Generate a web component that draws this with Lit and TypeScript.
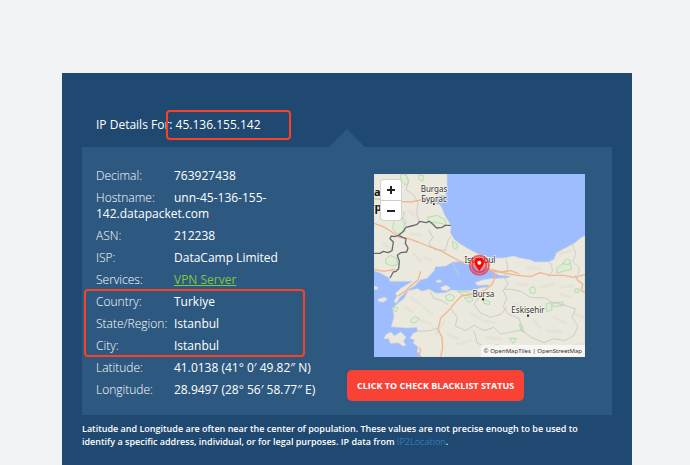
import { LitElement, html, css, svg } from "lit";
import { customElement } from "lit/decorators.js";

const LAND: string[] = [
  // Thrace and the Bulgarian coast
  "M0 0H219V45L214 58L219 66L204 64L190 66L183 76L177 84L188 90L198 92L205 106L212 124L231 154L229 176L240 196L258 210L282 224L318 243L352 252L356 268L345 286L322 274L290 274L262 262L236 264L215 276L184 278L180 290L160 312L138 318L124 334L104 346L92 358L78 370L66 388L60 382L70 366L64 358L82 342L96 334L116 322L48 322L46 312L18 296L0 290Z",
  // Anatolia
  "M356 252L390 252L420 246L436 252L470 258L482 264L524 264L540 256L548 236L586 216L604 206L620 192L633 186V549H144L130 532L132 518L118 508L122 498L108 492L118 478L132 472L128 460L100 462L52 458L60 428L56 402L74 386L92 372L102 350L130 344L144 352L166 346L186 358L214 356L232 348L262 350L300 350L318 342L340 340L346 332L310 334L304 326L326 318L352 314L400 312L410 306L376 304L354 292L344 276Z",
  "M36 482L50 474L62 486L80 474L96 490L88 502L96 514L86 516L74 506L50 508L44 494L30 494Z",
  "M12 376L32 370L40 376L28 384L14 382Z",
  "M0 336L12 340L10 346L0 346Z",
  "M186 320L200 318L202 324L190 326Z",
  "M200 340L216 334L230 342L218 350L204 348Z",
];

const ROADS: string[] = [
  "M0 148L28 158L54 174L76 190L104 194L132 204L162 216L200 230L232 248L262 264L300 272L332 282L360 292L398 298L430 304L470 308L498 296L530 304L568 304L600 310L633 302",
  "M0 286L30 292L64 286",
  "M140 292L132 318L112 334L96 350L72 366",
  "M360 290L364 310L352 334L330 350L300 360L262 366L238 392L222 412L200 432L192 466L204 490L206 520L200 549",
  "M76 82L110 84L150 76L184 76L214 70",
  "M0 74L20 76",
  "M130 549L140 532L136 520",
  "M352 286L380 294L410 290L436 300",
  "M604 304L612 320L626 330L622 350L633 356",
];

const REGIONS: string[] = [
  "M96 0L104 20L96 48L118 62L132 86L128 112L134 144",
  "M164 166L176 190L164 208L182 226L214 230L222 200L232 186",
  "M98 160L84 136L92 116L70 108",
  "M236 264L244 286L256 302",
  "M396 256L402 282L390 310L402 328L388 350L398 372L388 398L402 420L436 434L444 468L470 490L510 506L540 494L572 500L600 484L612 456L594 430L604 404L566 392L536 386L514 372L470 370L440 352L410 346L390 346",
  "M528 264L536 290L522 310",
  "M316 370L300 390L318 416L350 430L382 420L398 398",
  "M230 404L250 430L244 456L274 470L300 454L330 470L360 460L380 480L420 472L444 468",
  "M168 350L178 372L204 380L222 392",
  "M594 210L606 240L596 262L616 282L612 302",
  "M132 472L168 470L190 462",
  "M300 470L310 508L340 520L372 512L396 530L430 520",
];

const PARKS: string[] = [
  "M60 136L88 132L98 144L88 158L94 172L70 180L56 164Z",
  "M160 130L190 124L214 138L216 152L190 146L164 144Z",
  "M78 4L90 0L100 10L104 28L92 32L82 20Z",
  "M134 2L150 6L146 22L134 16Z",
  "M236 202L248 208L252 220L242 226L236 216Z",
  "M34 256L48 244L68 252L70 272L52 276L36 268Z",
  "M214 366L228 360L242 368L236 380L220 380Z",
  "M272 372L290 368L298 378L286 386Z",
  "M250 352L280 354L296 360L270 364Z",
  "M110 436L124 428L136 434L126 446L112 446Z",
  "M468 342L480 338L486 350L480 360L468 356Z",
  "M516 390L532 386L534 408L518 412Z",
  "M534 386L566 384L568 394L538 398Z",
  "M548 282L566 270L590 268L592 286L566 292L550 298Z",
  "M436 450L444 454L450 476L440 468Z",
  "M406 492L428 494L418 508Z",
  "M60 398L72 402L66 414L58 408Z",
  "M328 376L348 384L346 392L330 388Z",
  "M602 346L614 344L616 354L604 356Z",
  "M564 268L580 254L590 260L584 272Z",
];

const BORDERS: string[] = [
  "M231 154L214 154L204 160L188 162L176 150L166 142L156 146L138 142L128 152L112 156L96 160L86 174L74 184L62 188L52 186L48 194L58 204L54 230L42 236L28 232L18 238L0 238",
  "M74 184L86 190L96 194L94 208L102 222L98 234L80 236L70 244L76 262L74 284L66 292L58 294L48 312",
];

const HILLS: string[] = [
  "M20 120L50 110M104 110L126 128M30 210L46 222M110 180L140 184M150 250L172 258M120 240L140 262",
  "M110 372L140 390M150 400L174 420M90 400L116 412M140 440L170 448M210 440L186 480M220 480L250 494M250 510L290 500",
  "M330 440L360 446M290 420L320 432M420 390L450 400M480 440L500 462M540 430L574 446M340 490L380 496M520 470L560 474",
  "M430 330L460 334M500 340L540 330M560 340L596 336M560 360L590 370M460 280L500 284M556 240L590 230M600 420L630 430M580 520L630 510",
];

@customElement("region-map")
export class RegionMap extends LitElement {
  static styles = css`
    :host {
      display: block;
      position: relative;
      font-family: "Noto Sans", "Open Sans", sans-serif;
    }
    .canvas {
      display: block;
      width: 100%;
      height: auto;
      background: #9ebdff;
    }
    .land { fill: #ebe9de; stroke: #d9dad0; stroke-width: 2; }
    .hill { fill: none; stroke: #e5e3d8; stroke-width: 9; stroke-linecap: round; }
    .park { fill: #e2ebd5; stroke: #b4deae; stroke-width: 3; }
    .region { fill: none; stroke: #cdcdc9; stroke-width: 3; }
    .road { fill: none; stroke: #f0b592; stroke-width: 4; stroke-linejoin: round; }
    .border { fill: none; stroke: #6b6a6e; stroke-width: 4; stroke-linejoin: round; }
    .label {
      font-size: 24px;
      fill: #333;
      stroke: #f4f3ea;
      stroke-width: 4;
      paint-order: stroke;
      text-anchor: middle;
    }
    .major { font-size: 33px; font-weight: 700; fill: #111; text-anchor: start; }
    .zoom {
      position: absolute;
      top: 6px;
      left: 7px;
      width: 20px;
      display: grid;
      border-radius: 3px;
      background: #fff;
      box-shadow: 0 0 0 1px #d4d3ca;
    }
    .zoom button {
      display: grid;
      place-items: center;
      height: 20px;
      padding: 0;
      border: 0;
      background: none;
    }
    .zoom button + button { border-top: 1px solid #ccc; }
    .sign { width: 8px; height: 8px; display: block; }
    .credit {
      position: absolute;
      right: 0;
      bottom: 0;
      padding: 0 3px;
      background: rgba(255, 255, 255, 0.6);
      color: #333;
      font-size: 6px;
      line-height: 12px;
      white-space: nowrap;
    }
    .credit a { color: inherit; text-decoration: none; }
  `;

  render() {
    const draw = (name: string, paths: string[]) =>
      paths.map((d) => svg`<path class=${name} d=${d}></path>`);
    return html`
      <svg class="canvas" viewBox="0 0 633 549" role="img" aria-label="Map of Istanbul">
        ${draw("land", LAND)} ${draw("hill", HILLS)} ${draw("park", PARKS)}
        ${draw("region", REGIONS)} ${draw("road", ROADS)} ${draw("border", BORDERS)}
        <text class="label major" x="0" y="67">a</text>
        <text class="label major" x="-14" y="110">гр</text>
        <text class="label" x="180" y="54">Burgas</text>
        <text class="label" x="180" y="83">Бургас</text>
        <text class="label" x="318" y="267">Istanbul</text>
        <text class="label" x="328" y="368">Bursa</text>
        <text class="label" x="462" y="418">Eskisehir</text>
        <rect x="177" y="88" width="5" height="5" fill="#222"></rect>
        <rect x="324" y="373" width="6" height="6" fill="#222"></rect>
        <rect x="459" y="422" width="6" height="6" fill="#222"></rect>
        <circle cx="316" cy="274" r="29" fill="#f00" fill-opacity=".2" stroke="#ee3340" stroke-opacity=".75" stroke-width="5"></circle>
        <circle cx="316" cy="274" r="21" fill="none" stroke="#f02030" stroke-opacity=".65" stroke-width="6"></circle>
        <path d="M316 291C311 281 302 275 302 266A14 14 0 0 1 330 266C330 275 321 281 316 291Z" fill="#f00"></path>
        <circle cx="316" cy="266" r="6" fill="#fff"></circle>
      </svg>
      <div class="zoom">
        <button aria-label="Zoom in">
          <svg class="sign" viewBox="0 0 8 8"><path d="M0 4H8M4 0V8" stroke="#222" stroke-width="2"></path></svg>
        </button>
        <button aria-label="Zoom out">
          <svg class="sign" viewBox="0 0 8 8"><path d="M0 4H8" stroke="#222" stroke-width="2"></path></svg>
        </button>
      </div>
      <div class="credit">© <a href="#">OpenMapTiles</a> | <a href="#">OpenStreetMap</a></div>
    `;
  }
}

@customElement("app-root")
export class AppRoot extends LitElement {
  static styles = css`
    :host {
      display: flex;
      box-sizing: border-box;
      min-height: 100vh;
      padding: 73px 58px 0 62px;
      background: #f1f3f4;
      color: #fff;
      font-family: "Open Sans", sans-serif;
      font-size: 12px;
      line-height: 16px;
    }
    .card {
      flex: 1;
      min-width: 0;
      padding: 44px 20px 10px;
      background: #1f4971;
    }
    .title {
      margin: 0 0 14px 14px;
      font-size: 12px;
      font-weight: 400;
    }
    .ip { position: relative; }
    .mark {
      position: absolute;
      border: 2px solid #fc4024;
      border-radius: 4px;
      pointer-events: none;
    }
    .mark-ip { inset: -6px -30px -7px -10px; }
    .mark-place { inset: -2px 42px 0 -12px; }
    .panel {
      position: relative;
      display: grid;
      grid-template-columns: 1fr 1fr;
      background: #2d5980;
    }
    .panel::before {
      content: "";
      position: absolute;
      left: 50%;
      bottom: 100%;
      margin-left: -18px;
      border: 18px solid transparent;
      border-top: 0;
      border-bottom-color: #2d5980;
    }
    .details { padding: 18px 0 14px 14px; }
    .group { position: relative; margin: 0; }
    .row { padding: 3px 0; }
    dt {
      display: inline-block;
      width: 78px;
      font-weight: 300;
    }
    dd { display: inline; margin: 0; }
    .service { color: #86c540; }
    .side { padding: 27px 0 14px; }
    region-map { margin: 0 27px 13px; }
    .check {
      display: block;
      height: 31px;
      padding: 0 10px;
      border: 0;
      border-radius: 5px;
      background: #f84235;
      color: #fff;
      font: 700 9px/16px "Open Sans", sans-serif;
      white-space: nowrap;
    }
    .note {
      margin: 7px 0 0;
      padding-right: 20px;
      font-size: 9px;
      font-weight: 600;
      line-height: 13px;
    }
    .note a { color: #337ab7; font-weight: 400; text-decoration: none; }
  `;

  private row(label: string, value: unknown) {
    return html`<div class="row"><dt>${label}:</dt><dd>${value}</dd></div>`;
  }

  render() {
    return html`
      <main class="card">
        <h1 class="title">
          IP Details For: <span class="ip">45.136.155.142<span class="mark mark-ip"></span></span>
        </h1>
        <section class="panel">
          <div class="details">
            <dl class="group">
              ${this.row("Decimal", "763927438")}
              ${this.row("Hostname", "unn-45-136-155-142.datapacket.com")}
              ${this.row("ASN", "212238")} ${this.row("ISP", "DataCamp Limited")}
              ${this.row("Services", html`<a class="service" href="#">VPN Server</a>`)}
            </dl>
            <div class="group">
              <dl class="group">
                ${this.row("Country", "Turkiye")} ${this.row("State/Region", "Istanbul")}
                ${this.row("City", "Istanbul")}
              </dl>
              <div class="mark mark-place"></div>
            </div>
            <dl class="group">
              ${this.row("Latitude", "41.0138 (41° 0′ 49.82″ N)")}
              ${this.row("Longitude", "28.9497 (28° 56′ 58.77″ E)")}
            </dl>
          </div>
          <div class="side">
            <region-map></region-map>
            <button class="check">CLICK TO CHECK BLACKLIST STATUS</button>
          </div>
        </section>
        <p class="note">
          Latitude and Longitude are often near the center of population. These values are not
          precise enough to be used to identify a specific address, individual, or for legal
          purposes. IP data from <a href="#">IP2Location</a>.
        </p>
      </main>
    `;
  }
}
